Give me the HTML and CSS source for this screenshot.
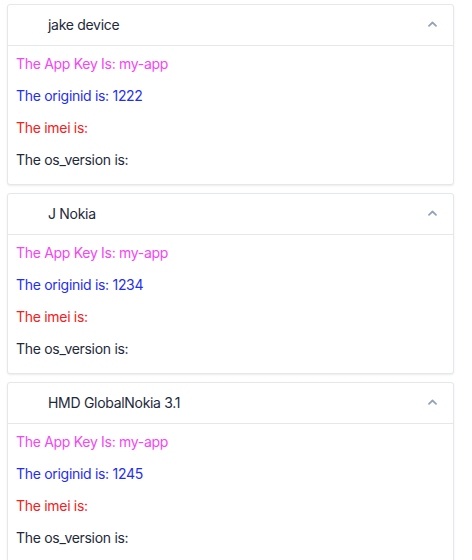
FILE: index.html
```html
<!DOCTYPE html>
<html>
<head>
<meta charset="utf-8">
<link rel="stylesheet" href="styles.css">
</head>
<body>
<div class="list">
  <section class="card">
    <div class="head">
      <span class="title">jake device</span>
      <svg class="chev" width="9" height="6" viewBox="0 0 9 6"><path d="M1 4.8 L4.5 1.5 L8 4.8" fill="none" stroke="#94a3b8" stroke-width="1.8" stroke-linecap="round" stroke-linejoin="round"/></svg>
    </div>
    <div class="body">
      <p class="key">The App Key Is: my-app</p>
      <p class="oid">The originid is: 1222</p>
      <p class="imei">The imei is:</p>
      <p class="os">The os_version is:</p>
    </div>
  </section>
  <section class="card">
    <div class="head">
      <span class="title">J Nokia</span>
      <svg class="chev" width="9" height="6" viewBox="0 0 9 6"><path d="M1 4.8 L4.5 1.5 L8 4.8" fill="none" stroke="#94a3b8" stroke-width="1.8" stroke-linecap="round" stroke-linejoin="round"/></svg>
    </div>
    <div class="body">
      <p class="key">The App Key Is: my-app</p>
      <p class="oid">The originid is: 1234</p>
      <p class="imei">The imei is:</p>
      <p class="os">The os_version is:</p>
    </div>
  </section>
  <section class="card">
    <div class="head">
      <span class="title">HMD GlobalNokia 3.1</span>
      <svg class="chev" width="9" height="6" viewBox="0 0 9 6"><path d="M1 4.8 L4.5 1.5 L8 4.8" fill="none" stroke="#94a3b8" stroke-width="1.8" stroke-linecap="round" stroke-linejoin="round"/></svg>
    </div>
    <div class="body">
      <p class="key">The App Key Is: my-app</p>
      <p class="oid">The originid is: 1245</p>
      <p class="imei">The imei is:</p>
      <p class="os">The os_version is:</p>
    </div>
  </section>
</div>
</body>
</html>
```

FILE: styles.css
```css
html, body {
  margin: 0;
  padding: 0;
  background: #fff;
}
body {
  font-family: Inter, "Noto Sans", sans-serif;
  font-size: 14px;
  letter-spacing: -0.3px;
  color: #1e293b;
  padding: 4px 18px 0 7px;
}
.list {
  display: flex;
  flex-direction: column;
  gap: 8px;
}
.card {
  border: 1px solid #e5e7eb;
  border-radius: 3px;
  box-shadow: 0 1px 2px rgba(0,0,0,0.08);
  background: #fff;
}
.head {
  height: 40px;
  display: flex;
  align-items: center;
  justify-content: space-between;
  padding: 0 16px 0 40px;
  border-bottom: 1px solid #e5e7eb;
}
.title {
  line-height: 20px;
}
.chev {
  display: block;
  margin-top: -3px;
}
.body {
  padding: 8px 8px 14px 8px;
  display: flex;
  flex-direction: column;
  gap: 12px;
}
.body p {
  margin: 0;
  line-height: 20px;
}
.key { color: #f545f5; }
.oid { color: #1f2ef5; }
.imei { color: #f52020; }
.os { color: #1e293b; }
```
